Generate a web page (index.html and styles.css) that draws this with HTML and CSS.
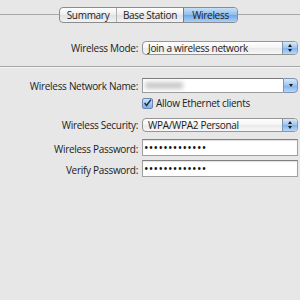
FILE: index.html
```html
<!DOCTYPE html>
<html lang="en">
<head>
<meta charset="UTF-8">
<title>Wireless</title>
<link rel="stylesheet" href="styles.css">
</head>
<body>
<div class="tabbar">
  <div class="tabs">
    <span class="tab summary">Summary</span>
    <span class="tab station">Base Station</span>
    <span class="tab active">Wireless</span>
  </div>
</div>

<div class="form top">
  <label class="label">Wireless Mode:</label>
  <div class="popup">
    <span class="popup-text">Join a wireless network</span>
    <span class="stepper"><i class="up"></i><i class="down"></i></span>
  </div>
</div>

<hr class="sep">

<div class="form main">
  <label class="label">Wireless Network Name:</label>
  <div class="combo">
    <span class="combo-field"><span class="blur"></span></span>
    <span class="combo-btn"><i class="down"></i></span>
  </div>

  <span></span>
  <div class="check-row">
    <span class="checkbox">
      <svg width="10" height="10" viewBox="0 0 10 10"><path d="M1.8 5 L4 7.8 L8.8 1.2" fill="none" stroke="#1c2f4f" stroke-width="1.7"/></svg>
    </span>
    <span>Allow Ethernet clients</span>
  </div>

  <label class="label">Wireless Security:</label>
  <div class="popup">
    <span class="popup-text">WPA/WPA2 Personal</span>
    <span class="stepper"><i class="up"></i><i class="down"></i></span>
  </div>

  <label class="label">Wireless Password:</label>
  <div class="field">&bull;&bull;&bull;&bull;&bull;&bull;&bull;&bull;&bull;&bull;&bull;&bull;&bull;</div>

  <label class="label">Verify Password:</label>
  <div class="field">&bull;&bull;&bull;&bull;&bull;&bull;&bull;&bull;&bull;&bull;&bull;&bull;&bull;</div>
</div>
</body>
</html>
```

FILE: styles.css
```css
body {
  margin: 0;
  background-color: #e7e7e7;
  font-family: 'Open Sans', sans-serif;
  font-size: 10px;
  letter-spacing: -0.3px;
  color: #222;
  width: 300px;
  height: 300px;
  overflow: hidden;
}

.tabbar {
  display: flex;
  padding-top: 7px;
  padding-left: 59px;
  background: linear-gradient(#e7e7e7 7px, #a8a8a8 7px, #a8a8a8 8px, #e7e7e7 8px) no-repeat;
  background-position: 0 7px;
  background-size: 100% 15px;
}

.tabs {
  display: flex;
  border: 1px solid #8c8c8c;
  border-radius: 4px;
  overflow: hidden;
  height: 14px;
  background: linear-gradient(#ffffff, #ececec 50%, #e0e0e0 50%, #f2f2f2);
}

.tab {
  display: flex;
  align-items: center;
  justify-content: center;
  border-left: 1px solid #b0b0b0;
  line-height: 14px;
}

.tab.summary {
  border-left: none;
  width: 56px;
}

.tab.station {
  width: 66px;
}

.tab.active {
  background: linear-gradient(#c8e0f8, #8fbcec 50%, #6ea6e6 50%, #a8d2f8);
  border-left-color: #5c7fa8;
  width: 53px;
}

.form {
  display: grid;
  grid-template-columns: 138px 156px;
  column-gap: 4px;
  align-items: center;
}

.form.top {
  margin-top: 18px;
}

/* rows are not evenly spaced in the original sheet */
.form.main {
  grid-template-rows: 15px 15px 24px 24px 21px;
  align-items: end;
}

.label {
  text-align: right;
  line-height: 14px;
}

.popup {
  height: 12px;
  border: 1px solid #959595;
  border-radius: 4px;
  display: flex;
  align-items: center;
  background: linear-gradient(#ffffff, #f4f4f4 50%, #e9e9e9 50%, #f7f7f7);
  overflow: hidden;
}

.popup-text {
  flex: 1;
  padding-left: 5px;
}

.stepper {
  width: 14px;
  height: 12px;
  display: flex;
  flex-direction: column;
  align-items: center;
  justify-content: center;
  gap: 2px;
  border-left: 1px solid #7a94b6;
  background: linear-gradient(#d8e9fa, #9ec4ee 50%, #7fb1ea 50%, #b8d8f8);
}

.up, .down {
  display: block;
  width: 0;
  height: 0;
  border-left: 2px solid transparent;
  border-right: 2px solid transparent;
}

.up {
  border-bottom: 3px solid #1a1a1a;
}

.down {
  border-top: 3px solid #1a1a1a;
}

.sep {
  margin: 11px 0 10px;
  border: none;
  border-top: 1px solid #a6a6a6;
  border-bottom: 1px solid #f4f4f4;
}

.combo {
  display: flex;
  height: 15px;
}

.combo-field {
  flex: 1;
  background: #fff;
  border: 1px solid #9a9a9a;
  border-top-color: #7a7a7a;
  border-right: none;
  display: flex;
  align-items: center;
}

.blur {
  margin-left: 2px;
  width: 38px;
  height: 7px;
  background: #cacaca;
  filter: blur(2px);
}

.combo-btn {
  width: 13px;
  border: 1px solid #7f94b0;
  border-radius: 0 4px 4px 0;
  background: linear-gradient(#d8e9fa, #9ec4ee 50%, #7fb1ea 50%, #b8d8f8);
  display: flex;
  align-items: center;
  justify-content: center;
}

.check-row {
  display: flex;
  align-items: center;
  gap: 3px;
  height: 10px;
}

.checkbox {
  width: 9px;
  height: 9px;
  border: 1px solid #6c87ad;
  border-radius: 2px;
  background: linear-gradient(#cde3fa, #7fb1ea);
  display: flex;
  align-items: center;
  justify-content: center;
}

.field {
  height: 15px;
  line-height: 15px;
  background: #fff;
  border: 1px solid #a0a0a0;
  border-top-color: #808080;
  box-shadow: inset 0 1px 1px rgba(0, 0, 0, 0.12);
  padding-left: 1px;
  font-size: 12px;
  letter-spacing: 0.3px;
  color: #111;
}
```
